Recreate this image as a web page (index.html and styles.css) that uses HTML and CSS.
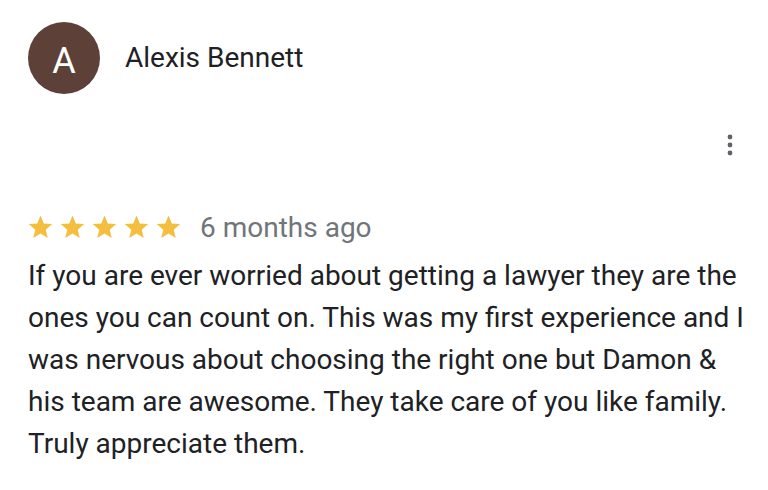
FILE: index.html
```html
<!DOCTYPE html>
<html lang="en">
<head>
<meta charset="utf-8">
<title>Review</title>
<link rel="stylesheet" href="styles.css">
</head>
<body>
<div class="review">
  <div class="header">
    <div class="avatar">A</div>
    <div class="name">Alexis Bennett</div>
  </div>
  <div class="menu-row">
    <button class="menu" aria-label="More options">
      <svg width="32" height="32" viewBox="0 0 32 32"><circle cx="16" cy="8" r="2.4"/><circle cx="16" cy="16" r="2.4"/><circle cx="16" cy="24" r="2.4"/></svg>
    </button>
  </div>
  <div class="meta">
    <div class="stars">
      <svg class="star" viewBox="0 0 24 24"><path d="M12 1.5l3.1 7.6 8.2.6-6.3 5.3 2 8-7-4.4-7 4.4 2-8L.7 9.7l8.2-.6z"/></svg>
      <svg class="star" viewBox="0 0 24 24"><path d="M12 1.5l3.1 7.6 8.2.6-6.3 5.3 2 8-7-4.4-7 4.4 2-8L.7 9.7l8.2-.6z"/></svg>
      <svg class="star" viewBox="0 0 24 24"><path d="M12 1.5l3.1 7.6 8.2.6-6.3 5.3 2 8-7-4.4-7 4.4 2-8L.7 9.7l8.2-.6z"/></svg>
      <svg class="star" viewBox="0 0 24 24"><path d="M12 1.5l3.1 7.6 8.2.6-6.3 5.3 2 8-7-4.4-7 4.4 2-8L.7 9.7l8.2-.6z"/></svg>
      <svg class="star" viewBox="0 0 24 24"><path d="M12 1.5l3.1 7.6 8.2.6-6.3 5.3 2 8-7-4.4-7 4.4 2-8L.7 9.7l8.2-.6z"/></svg>
    </div>
    <span class="date">6 months ago</span>
  </div>
  <p class="text">If you are ever worried about getting a lawyer they are the ones you can count on. This was my first experience and I was nervous about choosing the right one but Damon &amp; his team are awesome. They take care of you like family. Truly appreciate them.</p>
</div>
</body>
</html>
```

FILE: styles.css
```css
html, body {
  margin: 0;
  padding: 0;
  background: #ffffff;
}
body {
  font-family: Roboto, "Liberation Sans", Arial, sans-serif;
  color: #202124;
}
.review {
  display: flex;
  flex-direction: column;
  padding: 22px 22px 0 28px;
}
.header {
  display: flex;
  align-items: center;
  gap: 25px;
  height: 72px;
}
.avatar {
  width: 72px;
  height: 72px;
  border-radius: 50%;
  background: #5d4037;
  color: #ffffff;
  font-size: 36px;
  line-height: 72px;
  text-align: center;
  padding-top: 3px;
  box-sizing: border-box;
  flex: none;
}
.name {
  font-size: 28px;
  line-height: 36px;
  color: #202124;
}
.menu-row {
  display: flex;
  justify-content: flex-end;
  margin-top: 35px;
}
.menu {
  width: 32px;
  height: 32px;
  padding: 0;
  border: 0;
  background: none;
  display: block;
}
.menu svg {
  display: block;
  fill: #5f6368;
}
.meta {
  display: flex;
  align-items: center;
  margin-top: 46px;
  height: 42px;
}
.stars {
  display: flex;
  gap: 7px;
  margin-top: -3px;
  margin-right: 19px;
}
.star {
  width: 25px;
  height: 25px;
  fill: #f4bf3f;
  display: block;
}
.date {
  font-size: 28px;
  line-height: 42px;
  color: #70757a;
}
.text {
  margin: 6px 0 0 0;
  font-size: 28px;
  line-height: 42px;
  color: #202124;
}
```
